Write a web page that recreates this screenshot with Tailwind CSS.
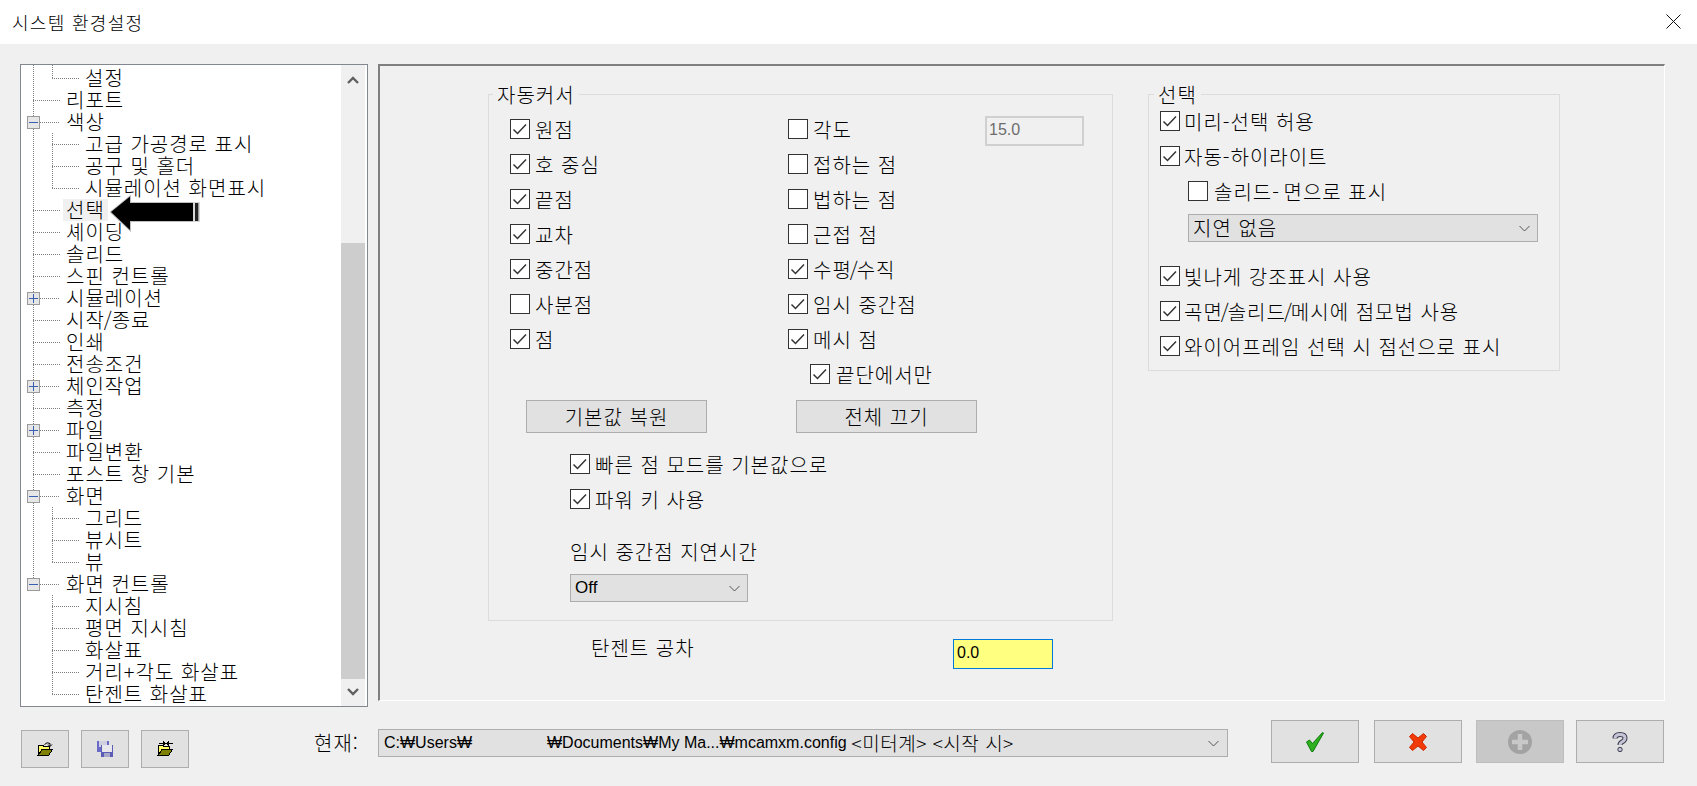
<!DOCTYPE html>
<html lang="ko">
<head>
<meta charset="utf-8">
<title>시스템 환경설정</title>
<script src="https://cdn.jsdelivr.net/npm/@tailwindcss/browser@4"></script>
</head>
<body class="m-0">
<div class="flex h-[786px] w-[1697px] flex-col overflow-hidden bg-[#f0f0f0] font-['Noto_Sans_CJK_KR','Noto_Sans_CJK_SC',sans-serif] text-[20px] font-light leading-[22px] tracking-[1px] text-black">

  <!-- title bar -->
  <div class="flex h-[44px] shrink-0 items-center justify-between bg-white pl-[12px] pr-[16px]">
    <span class="text-[18px] tracking-[1.3px]">시스템 환경설정</span>
    <svg class="mb-[1px] h-[15px] w-[15px]" viewBox="0 0 15 15"><path d="M0.5 0.5L14.5 14.5M14.5 0.5L0.5 14.5" stroke="#111" fill="none"/></svg>
  </div>

  <!-- main -->
  <div class="flex h-[657px] shrink-0 pl-[20px] pt-[20px]">
    <!-- tree -->
    <div class="relative flex h-[643px] w-[348px] shrink-0 border border-[#828790] bg-white">
      <svg class="absolute left-0 top-0 h-[641px] w-[320px]" viewBox="21 65 320 641" shape-rendering="crispEdges">
        <g stroke="#808080" stroke-dasharray="1 1" fill="none">
          <path d="M33.5 65V578M52.5 65V78M52.5 133V188M52.5 507V562M52.5 595V694"/>
          <path d="M52 78.5H79M33 100.5H60M40 122.5H60M52 144.5H79M52 166.5H79M52 188.5H79M33 210.5H60M33 232.5H60M33 254.5H60M33 276.5H60M40 298.5H60M33 320.5H60M33 342.5H60M33 364.5H60M40 386.5H60M33 408.5H60M40 430.5H60M33 452.5H60M33 474.5H60M40 496.5H60M52 518.5H79M52 540.5H79M52 562.5H79M40 584.5H60M52 606.5H79M52 628.5H79M52 650.5H79M52 672.5H79M52 694.5H79"/>
        </g>
        <g fill="#e6e6e6" stroke="#9a9a9a">
          <rect x="27.5" y="116.5" width="12" height="12"/>
          <rect x="27.5" y="292.5" width="12" height="12"/>
          <rect x="27.5" y="380.5" width="12" height="12"/>
          <rect x="27.5" y="424.5" width="12" height="12"/>
          <rect x="27.5" y="490.5" width="12" height="12"/>
          <rect x="27.5" y="578.5" width="12" height="12"/>
        </g>
        <path d="M29 122.5H38M29 298.5H38M33.5 294V303M29 386.5H38M33.5 382V391M29 430.5H38M33.5 426V435M29 496.5H38M29 584.5H38" stroke="#3a5fb0" fill="none"/>
      </svg>

      <div class="relative min-w-0 flex-1 whitespace-nowrap pt-[2px]">
        <div class="h-[22px] pl-[64px]">설정</div>
        <div class="h-[22px] pl-[45px]">리포트</div>
        <div class="h-[22px] pl-[45px]">색상</div>
        <div class="h-[22px] pl-[64px]">고급 가공경로 표시</div>
        <div class="h-[22px] pl-[64px]">공구 및 홀더</div>
        <div class="h-[22px] pl-[64px]">시뮬레이션 화면표시</div>
        <div class="h-[22px] pl-[45px]"><span class="-ml-[3px] inline-block h-[22px] bg-[#f0f0f0] px-[3px]">선택</span></div>
        <div class="h-[22px] pl-[45px]">셰이딩</div>
        <div class="h-[22px] pl-[45px]">솔리드</div>
        <div class="h-[22px] pl-[45px]">스핀 컨트롤</div>
        <div class="h-[22px] pl-[45px]">시뮬레이션</div>
        <div class="h-[22px] pl-[45px]">시작<span class="-mx-[1px]">/</span>종료</div>
        <div class="h-[22px] pl-[45px]">인쇄</div>
        <div class="h-[22px] pl-[45px]">전송조건</div>
        <div class="h-[22px] pl-[45px]">체인작업</div>
        <div class="h-[22px] pl-[45px]">측정</div>
        <div class="h-[22px] pl-[45px]">파일</div>
        <div class="h-[22px] pl-[45px]">파일변환</div>
        <div class="h-[22px] pl-[45px]">포스트 창 기본</div>
        <div class="h-[22px] pl-[45px]">화면</div>
        <div class="h-[22px] pl-[64px]">그리드</div>
        <div class="h-[22px] pl-[64px]">뷰시트</div>
        <div class="h-[22px] pl-[64px]">뷰</div>
        <div class="h-[22px] pl-[45px]">화면 컨트롤</div>
        <div class="h-[22px] pl-[64px]">지시침</div>
        <div class="h-[22px] pl-[64px]">평면 지시침</div>
        <div class="h-[22px] pl-[64px]">화살표</div>
        <div class="h-[22px] pl-[64px]">거리+각도 화살표</div>
        <div class="h-[22px] pl-[64px]">탄젠트 화살표</div>
      </div>

      <!-- scrollbar -->
      <div class="mr-[2px] flex w-[24px] shrink-0 flex-col bg-[#f0f0f0]">
        <div class="flex h-[178px] shrink-0 items-start justify-center pt-[11px]">
          <svg class="h-[8px] w-[12px]" viewBox="0 0 12 8"><path d="M1 7L6 2L11 7" stroke="#606060" stroke-width="2.4" fill="none"/></svg>
        </div>
        <div class="h-[436px] shrink-0 bg-[#cdcdcd]"></div>
        <div class="flex flex-1 items-start justify-center pt-[9px]">
          <svg class="h-[8px] w-[12px]" viewBox="0 0 12 8"><path d="M1 1L6 6L11 1" stroke="#606060" stroke-width="2.4" fill="none"/></svg>
        </div>
      </div>

      <!-- annotation arrow -->
      <svg class="absolute left-[89px] top-[127px] h-[40px] w-[94px]" viewBox="110 192 94 40">
        <path d="M111 212L130 196.5V203H193V221H130V230Z" fill="#000" stroke="#000" stroke-opacity="0.25" stroke-width="2"/>
        <rect x="193" y="202" width="7" height="20" fill="#d8d8d8"/>
        <rect x="195" y="203" width="3" height="18" fill="#222"/>
        <rect x="198" y="203" width="1" height="18" fill="#999"/>
      </svg>
    </div>

    <!-- settings panel -->
    <div class="ml-[10px] flex h-[637px] w-[1287px] shrink-0 items-start border-b border-l-2 border-r border-t-2 border-b-white border-l-[#808080] border-r-white border-t-[#808080] pl-[108px] pt-[28px]">

      <div class="w-[625px] shrink-0">
        <!-- 자동커서 -->
        <div class="relative h-[527px] border border-[#dcdcdc] pl-[21px] pt-[24px]">
          <span class="absolute left-[4px] top-[-11px] bg-[#f0f0f0] px-[4px]">자동커서</span>
          <div class="grid grid-cols-[278px_296px]">
            <div class="flex h-[35px] items-start"><span class="h-5 w-5 shrink-0 border border-[#333] bg-white"><svg viewBox="0 0 18 18"><path d="M2.5 9.5L6.5 13.5L15 4.5" stroke="#333" stroke-width="1.5" fill="none"/></svg></span><span class="ml-[5px]">원점</span></div>
            <div class="flex h-[35px] items-start"><span class="h-5 w-5 shrink-0 border border-[#333] bg-white"></span><span class="ml-[5px]">각도</span><span class="-mt-[3px] ml-auto block h-[30px] w-[99px] border-2 border-[#d0d0d0] pl-[2px] font-['Liberation_Sans',sans-serif] text-[16px] font-medium leading-[24px] tracking-normal text-[#6d6d6d]">15.0</span></div>
            <div class="flex h-[35px] items-start"><span class="h-5 w-5 shrink-0 border border-[#333] bg-white"><svg viewBox="0 0 18 18"><path d="M2.5 9.5L6.5 13.5L15 4.5" stroke="#333" stroke-width="1.5" fill="none"/></svg></span><span class="ml-[5px]">호 중심</span></div>
            <div class="flex h-[35px] items-start"><span class="h-5 w-5 shrink-0 border border-[#333] bg-white"></span><span class="ml-[5px]">접하는 점</span></div>
            <div class="flex h-[35px] items-start"><span class="h-5 w-5 shrink-0 border border-[#333] bg-white"><svg viewBox="0 0 18 18"><path d="M2.5 9.5L6.5 13.5L15 4.5" stroke="#333" stroke-width="1.5" fill="none"/></svg></span><span class="ml-[5px]">끝점</span></div>
            <div class="flex h-[35px] items-start"><span class="h-5 w-5 shrink-0 border border-[#333] bg-white"></span><span class="ml-[5px]">법하는 점</span></div>
            <div class="flex h-[35px] items-start"><span class="h-5 w-5 shrink-0 border border-[#333] bg-white"><svg viewBox="0 0 18 18"><path d="M2.5 9.5L6.5 13.5L15 4.5" stroke="#333" stroke-width="1.5" fill="none"/></svg></span><span class="ml-[5px]">교차</span></div>
            <div class="flex h-[35px] items-start"><span class="h-5 w-5 shrink-0 border border-[#333] bg-white"></span><span class="ml-[5px]">근접 점</span></div>
            <div class="flex h-[35px] items-start"><span class="h-5 w-5 shrink-0 border border-[#333] bg-white"><svg viewBox="0 0 18 18"><path d="M2.5 9.5L6.5 13.5L15 4.5" stroke="#333" stroke-width="1.5" fill="none"/></svg></span><span class="ml-[5px]">중간점</span></div>
            <div class="flex h-[35px] items-start"><span class="h-5 w-5 shrink-0 border border-[#333] bg-white"><svg viewBox="0 0 18 18"><path d="M2.5 9.5L6.5 13.5L15 4.5" stroke="#333" stroke-width="1.5" fill="none"/></svg></span><span class="ml-[5px]">수평<span class="-mx-[2px]">/</span>수직</span></div>
            <div class="flex h-[35px] items-start"><span class="h-5 w-5 shrink-0 border border-[#333] bg-white"></span><span class="ml-[5px]">사분점</span></div>
            <div class="flex h-[35px] items-start"><span class="h-5 w-5 shrink-0 border border-[#333] bg-white"><svg viewBox="0 0 18 18"><path d="M2.5 9.5L6.5 13.5L15 4.5" stroke="#333" stroke-width="1.5" fill="none"/></svg></span><span class="ml-[5px]">임시 중간점</span></div>
            <div class="flex h-[35px] items-start"><span class="h-5 w-5 shrink-0 border border-[#333] bg-white"><svg viewBox="0 0 18 18"><path d="M2.5 9.5L6.5 13.5L15 4.5" stroke="#333" stroke-width="1.5" fill="none"/></svg></span><span class="ml-[5px]">점</span></div>
            <div class="flex h-[35px] items-start"><span class="h-5 w-5 shrink-0 border border-[#333] bg-white"><svg viewBox="0 0 18 18"><path d="M2.5 9.5L6.5 13.5L15 4.5" stroke="#333" stroke-width="1.5" fill="none"/></svg></span><span class="ml-[5px]">메시 점</span></div>
            <div></div>
            <div class="ml-[22px] flex h-[35px] items-start"><span class="h-5 w-5 shrink-0 border border-[#333] bg-white"><svg viewBox="0 0 18 18"><path d="M2.5 9.5L6.5 13.5L15 4.5" stroke="#333" stroke-width="1.5" fill="none"/></svg></span><span class="ml-[6px]">끝단에서만</span></div>
          </div>

          <div class="ml-[16px] mt-[1px] flex gap-[89px]">
            <div class="flex h-[33px] w-[181px] items-center justify-center border border-[#adadad] bg-[#e1e1e1]">기본값 복원</div>
            <div class="flex h-[33px] w-[181px] items-center justify-center border border-[#adadad] bg-[#e1e1e1]">전체 끄기</div>
          </div>

          <div class="ml-[60px] mt-[21px]">
            <div class="flex h-[35px] items-start"><span class="h-5 w-5 shrink-0 border border-[#333] bg-white"><svg viewBox="0 0 18 18"><path d="M2.5 9.5L6.5 13.5L15 4.5" stroke="#333" stroke-width="1.5" fill="none"/></svg></span><span class="ml-[5px]">빠른 점 모드를 기본값으로</span></div>
            <div class="flex h-[35px] items-start"><span class="h-5 w-5 shrink-0 border border-[#333] bg-white"><svg viewBox="0 0 18 18"><path d="M2.5 9.5L6.5 13.5L15 4.5" stroke="#333" stroke-width="1.5" fill="none"/></svg></span><span class="ml-[5px]">파워 키 사용</span></div>
            <div class="mt-[14px] h-[28px] leading-[28px]">임시 중간점 지연시간</div>
            <div class="mt-[8px] flex h-[28px] w-[178px] items-center justify-between border border-[#adadad] bg-[#e1e1e1] pl-[4px] pr-[7px] font-['Liberation_Sans',sans-serif] text-[17px] font-medium tracking-normal">
              <span>Off</span>
              <svg class="h-[7px] w-[11px]" viewBox="0 0 11 7"><path d="M0.5 1L5.5 6L10.5 1" stroke="#555" fill="none"/></svg>
            </div>
          </div>
        </div>

        <!-- 탄젠트 공차 -->
        <div class="mt-[18px] flex items-start">
          <span class="-mt-[5px] ml-[103px] h-[28px] w-[362px] shrink-0 leading-[28px]">탄젠트 공차</span>
          <span class="block h-[30px] w-[100px] border border-[#0078d7] bg-[#ffff80] pl-[3px] font-['Liberation_Sans',sans-serif] text-[16px] font-medium leading-[26px] tracking-normal">0.0</span>
        </div>
      </div>

      <!-- 선택 -->
      <div class="relative ml-[35px] h-[277px] w-[412px] shrink-0 border border-[#dcdcdc] pl-[11px] pt-[16px]">
        <span class="absolute left-[5px] top-[-11px] bg-[#f0f0f0] px-[4px]">선택</span>
        <div class="flex h-[35px] items-start"><span class="h-5 w-5 shrink-0 border border-[#333] bg-white"><svg viewBox="0 0 18 18"><path d="M2.5 9.5L6.5 13.5L15 4.5" stroke="#333" stroke-width="1.5" fill="none"/></svg></span><span class="ml-[4px]">미리-선택 허용</span></div>
        <div class="flex h-[35px] items-start"><span class="h-5 w-5 shrink-0 border border-[#333] bg-white"><svg viewBox="0 0 18 18"><path d="M2.5 9.5L6.5 13.5L15 4.5" stroke="#333" stroke-width="1.5" fill="none"/></svg></span><span class="ml-[4px]">자동-하이라이트</span></div>
        <div class="ml-[28px] flex h-[33px] items-start"><span class="h-5 w-5 shrink-0 border border-[#333] bg-white"></span><span class="ml-[6px]">솔리드<span class="-mr-[3px]">-</span> 면으로 표시</span></div>
        <div class="ml-[28px] flex h-[28px] w-[350px] items-center justify-between border border-[#adadad] bg-[#e1e1e1] pl-[4px] pr-[7px]">
          <span>지연 없음</span>
          <svg class="h-[7px] w-[11px]" viewBox="0 0 11 7"><path d="M0.5 1L5.5 6L10.5 1" stroke="#555" fill="none"/></svg>
        </div>
        <div class="mt-[24px] flex h-[35px] items-start"><span class="h-5 w-5 shrink-0 border border-[#333] bg-white"><svg viewBox="0 0 18 18"><path d="M2.5 9.5L6.5 13.5L15 4.5" stroke="#333" stroke-width="1.5" fill="none"/></svg></span><span class="ml-[4px]">빛나게 강조표시 사용</span></div>
        <div class="flex h-[35px] items-start"><span class="h-5 w-5 shrink-0 border border-[#333] bg-white"><svg viewBox="0 0 18 18"><path d="M2.5 9.5L6.5 13.5L15 4.5" stroke="#333" stroke-width="1.5" fill="none"/></svg></span><span class="ml-[4px]">곡면<span class="-mx-[2px]">/</span>솔리드<span class="-mx-[2px]">/</span>메시에 점모법 사용</span></div>
        <div class="flex h-[35px] items-start"><span class="h-5 w-5 shrink-0 border border-[#333] bg-white"><svg viewBox="0 0 18 18"><path d="M2.5 9.5L6.5 13.5L15 4.5" stroke="#333" stroke-width="1.5" fill="none"/></svg></span><span class="ml-[4px]">와이어프레임 선택 시 점선으로 표시</span></div>
      </div>
    </div>
  </div>

  <!-- bottom bar -->
  <div class="flex items-start pl-[21px]">
    <div class="mt-[29px] flex gap-[12px]">
      <div class="flex h-[38px] w-[48px] items-center justify-center border border-[#adadad] bg-[#e1e1e1]">
        <svg class="h-[16px] w-[16px]" viewBox="0 0 16 16" shape-rendering="crispEdges"><path d="M1 4.5H6L7 5.5H12V8H5L1.5 14H1Z" fill="#ffff66" stroke="#000"/><path d="M1 14.5L5 8.5H15.5L11.5 14.5Z" fill="#808000" stroke="#000"/><path d="M7.5 3.5Q10 0.5 13 2.5V5M11 3.5L13 5.5L15 3.5" stroke="#000" fill="none" shape-rendering="auto"/></svg>
      </div>
      <div class="flex h-[38px] w-[48px] items-center justify-center border border-[#adadad] bg-[#e1e1e1]">
        <svg class="h-[16px] w-[16px]" viewBox="0 0 16 16" shape-rendering="crispEdges"><rect x="0" y="0" width="12" height="11" fill="#6a6ac8"/><rect x="2" y="0" width="8" height="6" fill="#cfcfe0"/><rect x="4" y="4" width="12" height="12" fill="#5c5cb8"/><rect x="5" y="4" width="10" height="7" fill="#e8e8ec"/><rect x="7" y="12" width="6" height="4" fill="#a8a8c8"/></svg>
      </div>
      <div class="flex h-[38px] w-[48px] items-center justify-center border border-[#adadad] bg-[#e1e1e1]">
        <svg class="h-[16px] w-[16px]" viewBox="0 0 16 16" shape-rendering="crispEdges"><path d="M1 4.5H6L7 5.5H12V8H5L1.5 14H1Z" fill="#ffff66" stroke="#000"/><path d="M1 14.5L5 8.5H15.5L11.5 14.5Z" fill="#808000" stroke="#000"/><path d="M2 2.5H8M6 0.5L8 2.5L6 4.5M16 2.5H10M12 0.5L10 2.5L12 4.5" stroke="#000" fill="none"/></svg>
      </div>
    </div>

    <span class="ml-[125px] mt-[28px] w-[46px] shrink-0 whitespace-nowrap leading-[28px]">현재:</span>
    <div class="ml-[18px] mt-[28px] flex h-[28px] w-[850px] shrink-0 items-center justify-between border border-[#adadad] bg-[#e1e1e1] pl-[5px] pr-[8px] font-['Liberation_Sans','Noto_Sans_CJK_KR',sans-serif] text-[16px] font-normal tracking-normal">
      <span class="flex items-center whitespace-nowrap"><span class="w-[163px]">C:₩Users₩</span><span>₩Documents₩My Ma...₩mcamxm.config</span><span class="ml-[5px] font-['Noto_Sans_CJK_KR',sans-serif] text-[19px] font-light tracking-[0.5px]">&lt;미터계&gt; &lt;시작 시&gt;</span></span>
      <svg class="h-[7px] w-[11px]" viewBox="0 0 11 7"><path d="M0.5 1L5.5 6L10.5 1" stroke="#555" fill="none"/></svg>
    </div>

    <div class="ml-[43px] mt-[19px] flex">
      <div class="flex h-[43px] w-[88px] items-center justify-center border border-[#adadad] bg-[#e1e1e1]">
        <svg class="h-[20px] w-[18px]" viewBox="0 0 18 20"><path d="M0.5 10L3.5 8L6.5 11.5L16.5 0.5L17.5 1L7 19.5H5.5Z" fill="#2fb01e" stroke="#0b7a0b"/></svg>
      </div>
      <div class="ml-[15px] flex h-[43px] w-[88px] items-center justify-center border border-[#adadad] bg-[#e1e1e1]">
        <svg class="h-[18px] w-[18px]" viewBox="0 0 18 18"><path d="M3.5 0.5L9 5L14.5 0.5L17.5 3.5L13 9L17.5 14.5L14.5 17.5L9 13L3.5 17.5L0.5 14.5L5 9L0.5 3.5Z" fill="#f23a08" stroke="#c82800"/></svg>
      </div>
      <div class="ml-[14px] flex h-[43px] w-[88px] items-center justify-center border border-[#bdbdbd] bg-[#c8c8c8]">
        <svg class="h-[24px] w-[24px]" viewBox="0 0 24 24"><circle cx="12" cy="12" r="12" fill="#a3a3a3"/><path d="M12 4V20M4 12H20" stroke="#c8c8c8" stroke-width="4.5"/></svg>
      </div>
      <div class="ml-[12px] flex h-[43px] w-[88px] items-center justify-center border border-[#adadad] bg-[#e1e1e1]">
        <svg class="h-[20px] w-[16px]" viewBox="0 0 16 20"><path d="M3 6.5Q3 2.5 8 2.5Q13 2.5 13 6Q13 8.5 10 10Q8 11 8 13" fill="none" stroke="#3c3c50" stroke-width="5"/><path d="M3 6.5Q3 2.5 8 2.5Q13 2.5 13 6Q13 8.5 10 10Q8 11 8 13" fill="none" stroke="#c4c4d4" stroke-width="3"/><circle cx="8" cy="17.5" r="2.2" fill="#c4c4d4" stroke="#3c3c50"/></svg>
      </div>
    </div>
  </div>
</div>
</body>
</html>
